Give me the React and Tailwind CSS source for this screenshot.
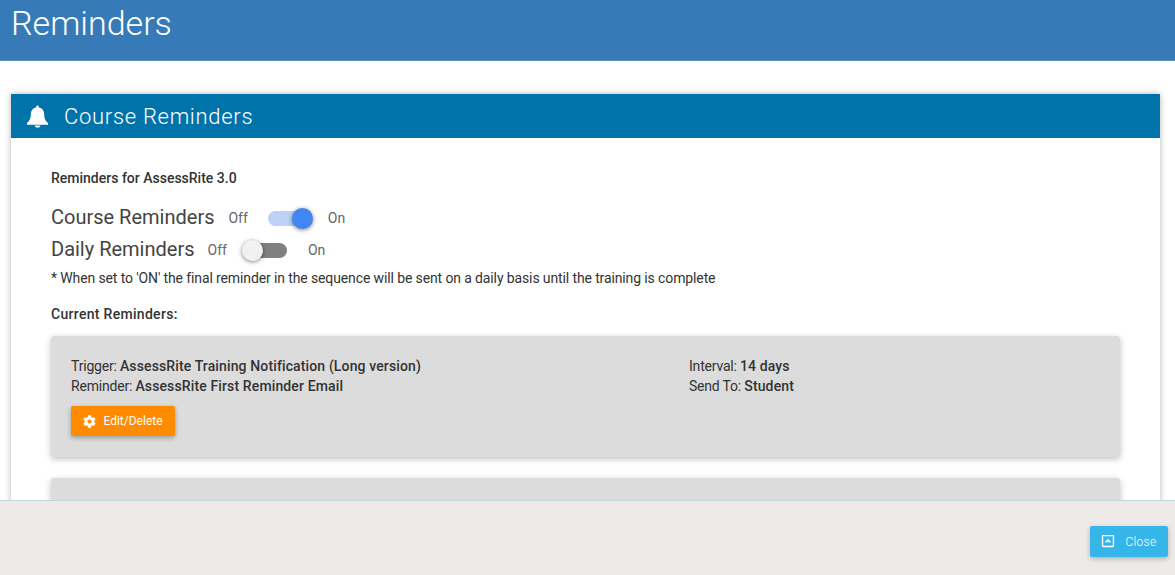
import { FaCog, FaRegCaretSquareUp } from "react-icons/fa";

function BellIcon() {
  return (
    <svg viewBox="0 0 24 24" className="w-[23px] h-[23px]" fill="currentColor">
      <path d="M12 0.5c-0.8 0-1.4 0.6-1.4 1.4v0.7C7 3.3 5 6 5 9.5c0 5-1.3 7-4 9.5v1.5h22V19c-2.7-2.5-4-4.5-4-9.5 0-3.5-2-6.2-5.6-6.9V1.9c0-0.8-0.6-1.4-1.4-1.4z" />
      <path d="M9 21.5h6c0 1.3-1.3 2.3-3 2.3s-3-1-3-2.3z" />
    </svg>
  );
}

function Toggle({ on }) {
  return (
    <div className="relative w-[42px] h-[15px]">
      <div className={"w-full h-full rounded-full " + (on ? "bg-[#bdd2f5]" : "bg-[#808080]")} />
      <div
        className={
          "absolute top-[-3px] w-[21px] h-[21px] rounded-full shadow-[0_1px_4px_rgba(0,0,0,0.5)] " +
          (on ? "right-[-3px] bg-[#4285f4]" : "left-[-3px] bg-[#f1f1f1]")
        }
      />
    </div>
  );
}

function ReminderCard({ trigger, reminder, interval, sendTo }) {
  const Label = ({ children }) => <span className="tracking-[-0.2px]">{children}</span>;
  const Value = ({ children }) => <span className="font-medium tracking-[0.13px]">{children}</span>;
  return (
    <div className="bg-[#dcdcdc] rounded-[3px] shadow-[0_2px_6px_rgba(0,0,0,0.25)] h-[121px] px-5 pt-[20px]">
      <div className="flex text-[14px] leading-[20px] text-[#333]">
        <div className="w-[618px]">
          <div><Label>Trigger: </Label><Value>{trigger}</Value></div>
          <div><Label>Reminder: </Label><Value>{reminder}</Value></div>
        </div>
        <div>
          <div><Label>Interval: </Label><Value>{interval}</Value></div>
          <div><Label>Send To: </Label><Value>{sendTo}</Value></div>
        </div>
      </div>
      <button className="mt-[10px] w-[104px] h-[30px] bg-[#ff8c00] rounded-[2px] shadow-[0_2px_5px_rgba(0,0,0,0.3)] text-white text-[12px] flex items-center justify-center gap-[7px]">
        <FaCog className="text-[13px]" />
        <span>Edit/Delete</span>
      </button>
    </div>
  );
}

export default function App() {
  return (
    <div className="relative h-[575px] overflow-hidden bg-white font-['Roboto',sans-serif]">
      <div className="h-[61px] bg-[#367ab7] border-b border-[#5b93c6] pl-[11px]">
        <h1 className="text-[34px] leading-[46px] font-light text-white">Reminders</h1>
      </div>

      <div className="mt-[33px] ml-[11px] mr-[15px] shadow-[0_0_6px_rgba(0,0,0,0.3)]">
        <div className="h-[44px] bg-[#0073aa] flex items-center text-white pl-[15px]">
          <BellIcon />
          <span className="ml-[15px] text-[22px] font-light tracking-[0.7px]">Course Reminders</span>
        </div>

        <div className="bg-white pl-10 pr-10 pt-[30px] pb-10 text-[#333]">
          <p className="text-[14px] leading-[20px] font-medium">Reminders for AssessRite 3.0</p>

          <div className="mt-[13px] flex items-center h-[32px]">
            <span className="text-[20px] text-[#444]">Course Reminders</span>
            <span className="ml-[14px] mt-[2px] text-[14px] text-[#666]">Off</span>
            <div className="ml-[20px] mt-[2px]"><Toggle on /></div>
            <span className="ml-[18px] mt-[2px] text-[14px] text-[#666]">On</span>
          </div>
          <div className="flex items-center h-[32px]">
            <span className="text-[20px] text-[#444]">Daily Reminders</span>
            <span className="ml-[13px] mt-[2px] text-[14px] text-[#666]">Off</span>
            <div className="ml-[18px] mt-[2px]"><Toggle /></div>
            <span className="ml-[21px] mt-[2px] text-[14px] text-[#666]">On</span>
          </div>

          <p className="mt-[3px] text-[14px] leading-[20px] tracking-[-0.12px]">
            * When set to 'ON' the final reminder in the sequence will be sent on a daily basis until the training is complete
          </p>
          <p className="mt-[16px] text-[14px] leading-[20px] font-medium tracking-[0.3px]">Current Reminders:</p>

          <div className="mt-[12px] flex flex-col gap-[21px]">
            <ReminderCard
              trigger="AssessRite Training Notification (Long version)"
              reminder="AssessRite First Reminder Email"
              interval="14 days"
              sendTo="Student"
            />
            <ReminderCard trigger="" reminder="" interval="" sendTo="" />
          </div>
        </div>
      </div>

      <div className="absolute left-0 right-0 bottom-0 h-[75px] bg-[#eeeaea] border-t border-[#bcd7e3]">
        <button className="absolute right-[7px] top-[25px] w-[78px] h-[31px] bg-[#35b5e8] rounded-[2px] shadow-[0_2px_5px_rgba(0,0,0,0.25)] text-white text-[12px] flex items-center justify-center gap-[10px]">
          <FaRegCaretSquareUp className="text-[14px] -mt-[2px]" />
          <span className="tracking-[0.3px] font-light">Close</span>
        </button>
      </div>
    </div>
  );
}
